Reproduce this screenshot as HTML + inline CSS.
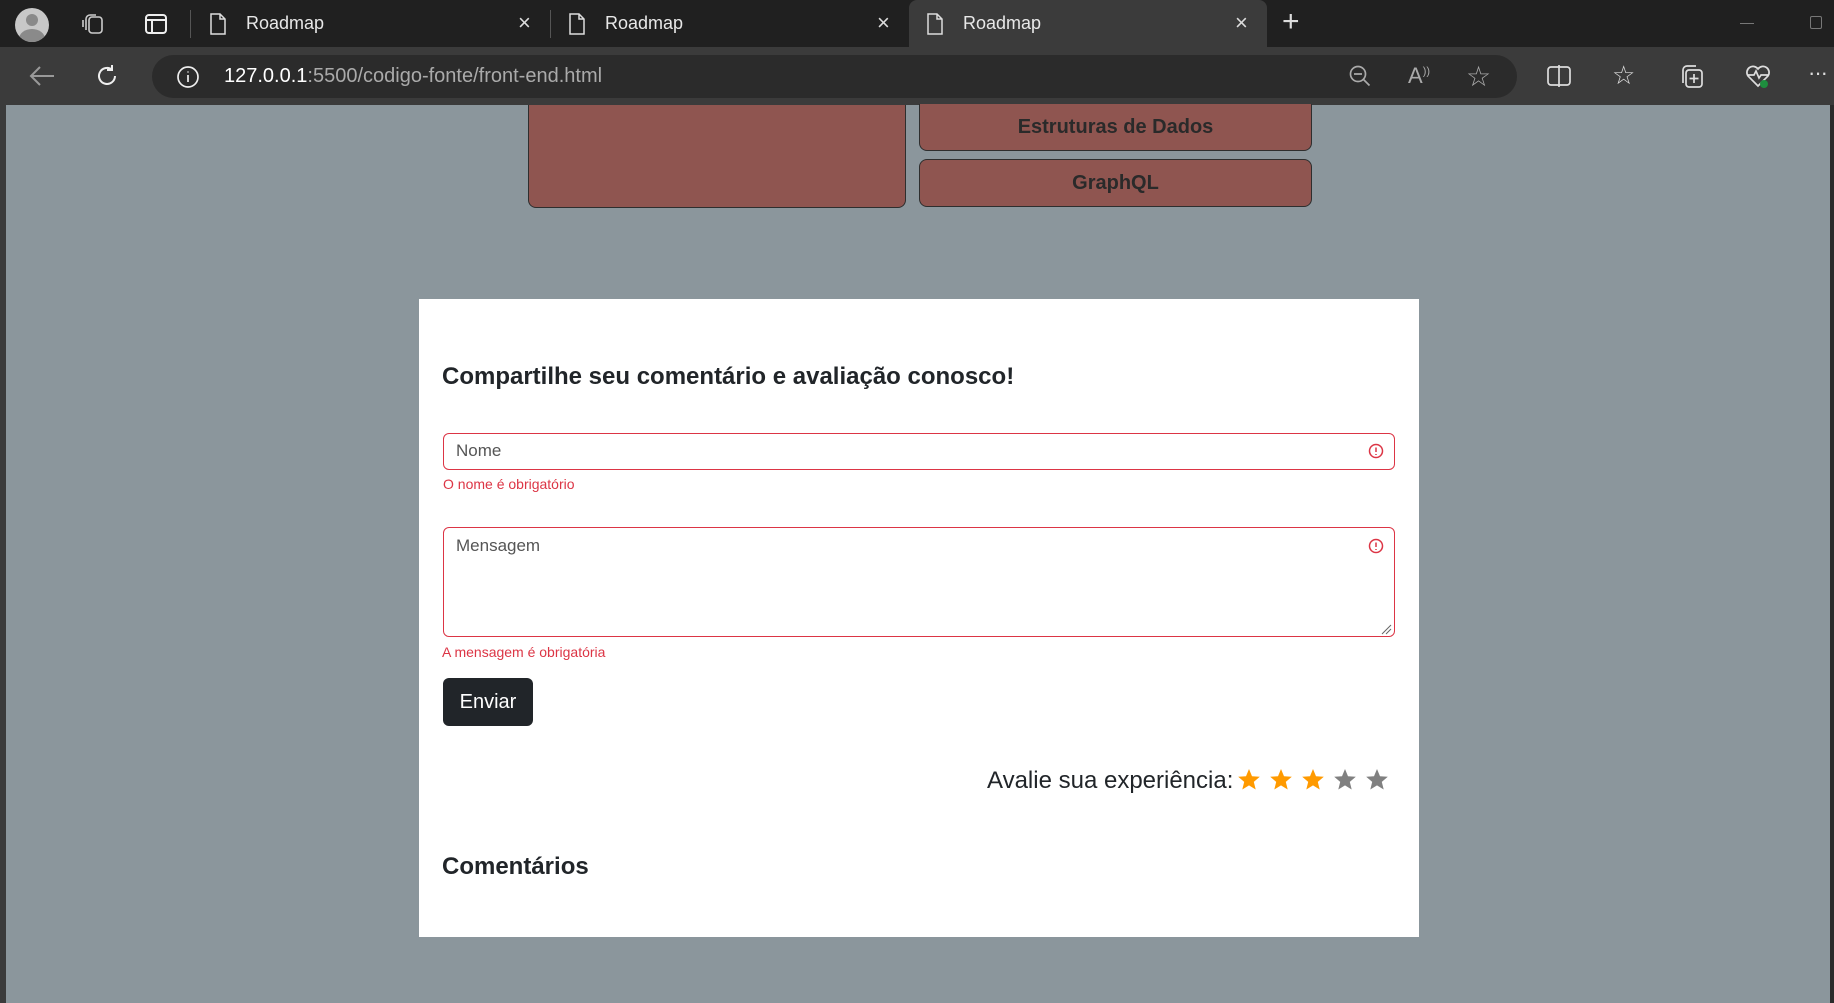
<!DOCTYPE html>
<html><head><meta charset="utf-8"><style>
*{margin:0;padding:0;box-sizing:border-box}
body{width:1834px;height:1003px;overflow:hidden;background:#2b2b2b;font-family:"Liberation Sans",Arial,sans-serif;position:relative}
.abs{position:absolute}
.tabtxt{color:#e8e8e8;font-size:18px;top:13px}
.page{left:6px;top:105px;width:1824px;height:898px;background:#8b969c}
.rb{background:#8f5550;border:1px solid #2e2e2e;border-radius:8px;color:#2a2a2a;font-weight:bold;font-size:20px;text-align:center}
.card{left:419px;top:299px;width:1000px;height:638px;background:#fff}
.err{color:#dc3545;font-size:14px}
.field{border:1px solid #dc3545;border-radius:6px;background:#fff}
.ph{color:#555;font-size:17px}
</style></head><body>
<div class="abs" style="left:0;top:0;width:1834px;height:47px;background:#202020"></div>
<div class="abs" style="left:15px;top:8px;width:34px;height:34px;border-radius:50%;background:#c8c8c8;overflow:hidden"><div style="position:absolute;left:11px;top:6px;width:12px;height:12px;border-radius:50%;background:#8a8a8a"></div><div style="position:absolute;left:4px;top:21px;width:26px;height:20px;border-radius:50%;background:#8a8a8a"></div></div>
<svg class="abs" style="left:80px;top:11px" width="26" height="26" viewBox="0 0 26 26" fill="none" stroke="#ccc" stroke-width="1.6"><rect x="9" y="6" width="13" height="16" rx="3"/><path d="M6 19V8a4 4 0 0 1 4-4h6M3 16V9"/></svg>
<svg class="abs" style="left:144px;top:13px" width="24" height="22" viewBox="0 0 24 22" fill="none" stroke="#eee" stroke-width="2"><rect x="2" y="2" width="20" height="18" rx="3"/><path d="M2 7h20M8 7v13"/></svg>
<div class="abs" style="left:190px;top:10px;width:1px;height:28px;background:#555"></div>
<div class="abs" style="left:550px;top:10px;width:1px;height:28px;background:#555"></div>
<div class="abs" style="left:909px;top:0;width:358px;height:47px;background:#3b3b3b;border-radius:8px 8px 0 0"></div>
<svg class="abs" style="left:208px;top:12px" width="20" height="24" viewBox="0 0 20 24" fill="none" stroke="#ddd" stroke-width="1.5"><path d="M3 2h9l5 5v15H3z M12 2v5h5"/></svg>
<div class="abs tabtxt" style="left:246px">Roadmap</div>
<div class="abs" style="left:518px;top:10px;color:#ddd;font-size:22px">×</div>
<svg class="abs" style="left:567px;top:12px" width="20" height="24" viewBox="0 0 20 24" fill="none" stroke="#ddd" stroke-width="1.5"><path d="M3 2h9l5 5v15H3z M12 2v5h5"/></svg>
<div class="abs tabtxt" style="left:605px">Roadmap</div>
<div class="abs" style="left:877px;top:10px;color:#ddd;font-size:22px">×</div>
<svg class="abs" style="left:925px;top:12px" width="20" height="24" viewBox="0 0 20 24" fill="none" stroke="#ddd" stroke-width="1.5"><path d="M3 2h9l5 5v15H3z M12 2v5h5"/></svg>
<div class="abs tabtxt" style="left:963px">Roadmap</div>
<div class="abs" style="left:1235px;top:10px;color:#ddd;font-size:22px">×</div>
<div class="abs" style="left:1282px;top:5px;color:#ddd;font-size:30px;font-weight:300">+</div>
<div class="abs" style="left:1740px;top:23px;width:14px;height:1px;background:#777"></div>
<div class="abs" style="left:1810px;top:16px;width:12px;height:13px;border:1px solid #777;border-radius:2px"></div>
<div class="abs" style="left:0;top:47px;width:1834px;height:58px;background:#3b3b3b"></div>
<svg class="abs" style="left:28px;top:64px" width="28" height="24" viewBox="0 0 28 24" fill="none" stroke="#999" stroke-width="2"><path d="M26 12H3M12 3l-9 9 9 9"/></svg>
<svg class="abs" style="left:94px;top:63px" width="26" height="26" viewBox="0 0 26 26" fill="none" stroke="#eee" stroke-width="2"><path d="M21 13a8 8 0 1 1-3-6.3M18 2v5h-5"/></svg>
<div class="abs" style="left:152px;top:55px;width:1365px;height:43px;background:#2b2b2b;border-radius:22px"></div>
<svg class="abs" style="left:176px;top:65px" width="24" height="24" viewBox="0 0 24 24" fill="none" stroke="#eee" stroke-width="1.7"><circle cx="12" cy="12" r="10"/><path d="M12 10v7M12 6.5v1"/></svg>
<div class="abs" style="left:224px;top:65px;font-size:20px;color:#fff">127.0.0.1<span style="color:#aaa">:5500/codigo-fonte/front-end.html</span></div>
<svg class="abs" style="left:1348px;top:64px" width="24" height="26" viewBox="0 0 24 26" fill="none" stroke="#aaa" stroke-width="1.7"><circle cx="10" cy="10" r="7.5"/><path d="M6 10h8M15.5 15.5l6 6"/></svg>
<div class="abs" style="left:1408px;top:63px;font-size:22px;color:#aaa">A<sup style="font-size:11px">))</sup></div>
<div class="abs" style="left:1466px;top:60px;font-size:28px;color:#aaa">☆</div>
<svg class="abs" style="left:1546px;top:64px" width="26" height="24" viewBox="0 0 26 24" fill="none" stroke="#ddd" stroke-width="1.7"><rect x="2" y="3" width="22" height="18" rx="3"/><path d="M13 1v22"/></svg>
<div class="abs" style="left:1612px;top:60px;font-size:26px;color:#ddd">☆</div>
<svg class="abs" style="left:1678px;top:62px" width="28" height="28" viewBox="0 0 28 28" fill="none" stroke="#ddd" stroke-width="1.7"><rect x="8" y="8" width="16" height="17" rx="3"/><path d="M5 21V8a4 4 0 0 1 4-4h9M16 12v9M11.5 16.5h9"/></svg>
<svg class="abs" style="left:1744px;top:62px" width="28" height="28" viewBox="0 0 28 28" fill="none" stroke="#ddd" stroke-width="1.7"><path d="M14 24 4 14a5.5 5.5 0 0 1 10-7 5.5 5.5 0 0 1 10 7L14 24z M4 13h6l2-4 3 7 2-3h7"/><circle cx="20" cy="22" r="4" fill="#1e8e3e" stroke="none"/></svg>
<div class="abs" style="left:1808px;top:60px;font-size:22px;color:#ddd;letter-spacing:-1px">···</div>
<div class="abs page"></div>
<div class="abs rb" style="left:528px;top:105px;width:378px;height:103px;border-top:none;border-radius:0 0 8px 8px"></div>
<div class="abs rb" style="left:919px;top:104px;width:393px;height:47px;line-height:47px;border-top:none;border-radius:0 0 8px 8px">Estruturas de Dados</div>
<div class="abs rb" style="left:919px;top:159px;width:393px;height:48px;line-height:47px">GraphQL</div>
<div class="abs" style="left:0;top:47px;width:6px;height:956px;background:#3b3b3b"></div>
<div class="abs card"></div>
<div class="abs" style="left:442px;top:363px;font-size:24px;font-weight:bold;color:#212529">Compartilhe seu comentário e avaliação conosco!</div>
<div class="abs field" style="left:443px;top:433px;width:952px;height:37px"></div>
<div class="abs ph" style="left:456px;top:441px">Nome</div>
<svg class="abs" style="left:1368px;top:443px" width="16" height="16" viewBox="0 0 16 16" fill="none" stroke="#dc3545" stroke-width="1.5"><circle cx="8" cy="8" r="6.5"/><path d="M8 4.5v4.5M8 11v1"/></svg>
<div class="abs err" style="left:443px;top:476px">O nome é obrigatório</div>
<div class="abs field" style="left:443px;top:527px;width:952px;height:110px"></div>
<div class="abs ph" style="left:456px;top:536px">Mensagem</div>
<svg class="abs" style="left:1368px;top:538px" width="16" height="16" viewBox="0 0 16 16" fill="none" stroke="#dc3545" stroke-width="1.5"><circle cx="8" cy="8" r="6.5"/><path d="M8 4.5v4.5M8 11v1"/></svg>
<svg class="abs" style="left:1380px;top:623px" width="12" height="12" viewBox="0 0 12 12" stroke="#666" stroke-width="1"><path d="M2 11 11 2M6 11l5-5"/></svg>
<div class="abs err" style="left:442px;top:644px">A mensagem é obrigatória</div>
<div class="abs" style="left:443px;top:678px;width:90px;height:48px;background:#212529;border-radius:6px;color:#fff;font-size:20px;text-align:center;line-height:48px">Enviar</div>
<div class="abs" style="left:987px;top:767px;font-size:24px;color:#212529">Avalie sua experiência:</div>
<svg class="abs" style="left:1238px;top:768px" width="160" height="26" viewBox="0 0 160 26">
<defs><path id="s" d="M11 1l3 7.2 7.8.6-6 5.1 1.9 7.6L11 17.4 4.3 21.5l1.9-7.6-6-5.1 7.8-.6z"/></defs>
<use href="#s" x="0" fill="#ff9a00"/><use href="#s" x="32" fill="#ff9a00"/><use href="#s" x="64" fill="#ff9a00"/><use href="#s" x="96" fill="#808080"/><use href="#s" x="128" fill="#808080"/></svg>
<div class="abs" style="left:442px;top:853px;font-size:24px;font-weight:bold;color:#212529">Comentários</div>
</body></html>
